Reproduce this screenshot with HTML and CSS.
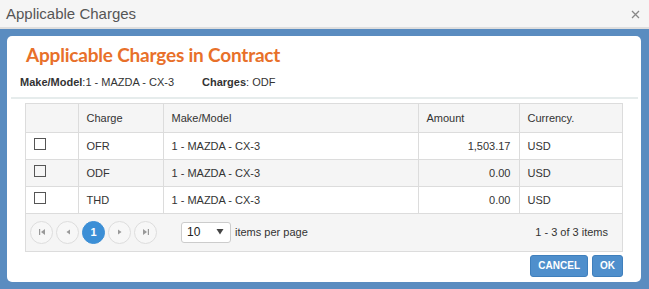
FILE: index.html
```html
<!DOCTYPE html>
<html lang="en">
  <head>
    <meta charset="UTF-8" />
    <title>Applicable Charges</title>
    <link rel="stylesheet" href="styles.css">
  </head>
  <body>
    <div class="dialog-bar">
      <span class="dialog-title">Applicable Charges</span>
      <svg class="dialog-close" width="9" height="9" viewBox="0 0 9 9"><path d="M1 1 L8 8 M8 1 L1 8" stroke="#888" stroke-width="1.3"/></svg>
    </div>
    <div class="dialog-frame">
      <div class="panel">
        <h1 class="panel-title">Applicable Charges in Contract</h1>
        <div class="info-line">
          <span class="info-item"><b>Make/Model</b>:1 - MAZDA - CX-3</span>
          <span class="info-item"><b>Charges</b>: ODF</span>
        </div>
        <div class="separator"></div>
        <div class="grid">
          <table class="grid-table">
            <colgroup>
              <col style="width: 52px" />
              <col style="width: 85px" />
              <col style="width: 255px" />
              <col style="width: 101px" />
              <col />
            </colgroup>
            <thead>
              <tr>
                <th></th>
                <th>Charge</th>
                <th>Make/Model</th>
                <th>Amount</th>
                <th>Currency.</th>
              </tr>
            </thead>
            <tbody>
              <tr>
                <td><span class="check"></span></td>
                <td>OFR</td>
                <td>1 - MAZDA - CX-3</td>
                <td class="num">1,503.17</td>
                <td>USD</td>
              </tr>
              <tr class="alt">
                <td><span class="check"></span></td>
                <td>ODF</td>
                <td>1 - MAZDA - CX-3</td>
                <td class="num">0.00</td>
                <td>USD</td>
              </tr>
              <tr>
                <td><span class="check"></span></td>
                <td>THD</td>
                <td>1 - MAZDA - CX-3</td>
                <td class="num">0.00</td>
                <td>USD</td>
              </tr>
            </tbody>
          </table>
          <div class="pager">
            <div class="pager-nav">
              <span class="page-btn">
                <svg width="8" height="8" viewBox="0 0 8 8"><rect x="1" y="1" width="1.2" height="6" fill="#999"/><path d="M7 1 L3 4 L7 7 Z" fill="#999"/></svg>
              </span>
              <span class="page-btn">
                <svg width="8" height="8" viewBox="0 0 8 8"><path d="M6 1.5 L2.5 4 L6 6.5 Z" fill="#999"/></svg>
              </span>
              <span class="page-btn active">1</span>
              <span class="page-btn">
                <svg width="8" height="8" viewBox="0 0 8 8"><path d="M2 1.5 L5.5 4 L2 6.5 Z" fill="#999"/></svg>
              </span>
              <span class="page-btn">
                <svg width="8" height="8" viewBox="0 0 8 8"><path d="M1 1 L5 4 L1 7 Z" fill="#999"/><rect x="5.8" y="1" width="1.2" height="6" fill="#999"/></svg>
              </span>
              <span class="page-size">
                10
                <svg width="8" height="6" viewBox="0 0 8 6"><path d="M0.5 0 L7.5 0 L4 5.5 Z" fill="#444"/></svg>
              </span>
              <span class="page-label">items per page</span>
            </div>
            <span class="pager-info">1 - 3 of 3 items</span>
          </div>
        </div>
        <div class="actions">
          <button class="btn">CANCEL</button>
          <button class="btn">OK</button>
        </div>
      </div>
    </div>
  </body>
</html>
```

FILE: styles.css
```css
body {
  margin: 0;
  font-family: "Liberation Sans", Arial, sans-serif;
  font-size: 11px;
  color: #333;
  background: #5a8cc0;
}
.dialog-bar {
  height: 27px;
  background: #f5f5f5;
  border-bottom: 2px solid #dedede;
  display: flex;
  align-items: center;
  justify-content: space-between;
  padding: 0 9px 0 6px;
}
.dialog-title {
  font-size: 15px;
  color: #555;
}
.dialog-close {
  margin-top: 2px;
}
.dialog-frame {
  background: #5a8cc0;
  padding: 7px 8px 7px 7px;
}
.panel {
  background: #fff;
  border-radius: 5px;
  height: 246px;
  box-sizing: border-box;
  padding: 5px 0 0 0;
}
.panel-title {
  margin: 0 0 0 19px;
  font-family: Lato, "Open Sans", sans-serif;
  font-weight: bold;
  font-size: 19px;
  letter-spacing: -0.2px;
  color: #e8702a;
  line-height: 28px;
}
.info-line {
  display: flex;
  margin: 6px 0 0 13px;
  height: 14px;
  line-height: 14px;
}
.info-item {
  width: 182px;
}
.separator {
  height: 2px;
  background: #e6ecec;
  margin: 8px 3px 0 4px;
}
.grid {
  margin: 4px 18px 0 18px;
  border: 1px solid #dcdcdc;
}
.grid-table {
  width: 100%;
  border-collapse: collapse;
  table-layout: fixed;
}
.grid-table th,
.grid-table td {
  height: 27px;
  padding: 0 8px;
  text-align: left;
  border-left: 1px solid #dcdcdc;
  border-bottom: 1px solid #dcdcdc;
  box-sizing: border-box;
}
.grid-table th {
  font-weight: normal;
  background: #f5f5f5;
  height: 28px;
}
.grid-table th:first-child,
.grid-table td:first-child {
  border-left: none;
}
.grid-table .alt td {
  background: #f5f5f5;
}
.grid-table td.num {
  text-align: right;
}
.check {
  display: block;
  width: 10px;
  height: 10px;
  border: 1px solid #555;
  margin-top: -4px;
}
.pager {
  background: #f5f5f5;
  height: 37px;
  display: flex;
  align-items: center;
  justify-content: space-between;
  padding: 0 14px 0 4px;
}
.pager-nav {
  display: flex;
  align-items: center;
}
.page-btn {
  width: 21px;
  height: 21px;
  border: 1px solid #ddd;
  border-radius: 50%;
  background: #f7f7f7;
  margin-right: 3px;
  display: flex;
  align-items: center;
  justify-content: center;
}
.page-btn.active {
  background: #3c8fd6;
  border-color: #3c8fd6;
  color: #fff;
  font-weight: bold;
}
.page-size {
  margin-left: 21px;
  width: 37px;
  height: 19px;
  border: 1px solid #ccc;
  border-radius: 3px;
  background: #fff;
  display: flex;
  align-items: center;
  justify-content: space-between;
  padding: 0 6px 0 5px;
  font-size: 12px;
  color: #222;
}
.page-label {
  margin-left: 4px;
}
.actions {
  display: flex;
  justify-content: flex-end;
  gap: 4px;
  margin: 3px 18px 0 0;
}
.btn {
  font-family: "Liberation Sans", Arial, sans-serif;
  font-size: 10px;
  font-weight: bold;
  color: #fff;
  background: #4f8fcc;
  border: 1px solid #3f7fbc;
  border-radius: 3px;
  height: 22px;
  padding: 0 7px;
  margin: 0;
}
```
